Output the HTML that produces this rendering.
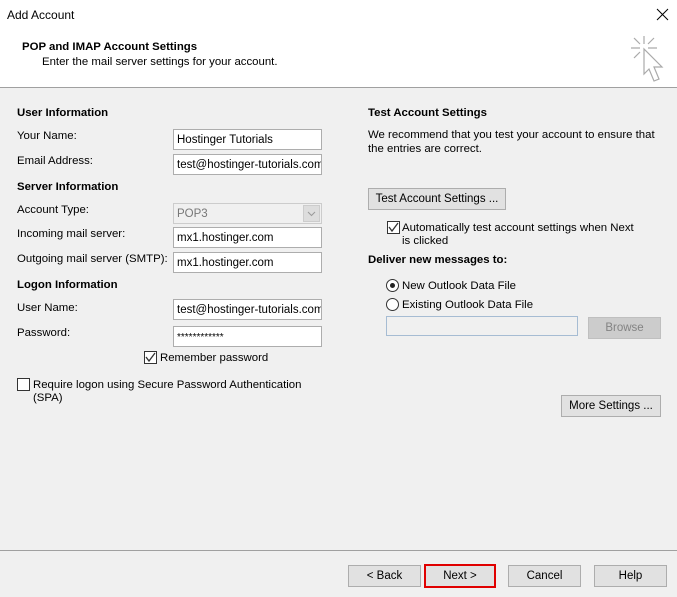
<!DOCTYPE html>
<html><head><style>
*{margin:0;padding:0;box-sizing:border-box}
body{width:677px;height:597px;background:#f0f0f0;font-family:"Liberation Sans",Arial,sans-serif;font-size:11.4px;color:#000;position:relative;overflow:hidden}
.a{position:absolute;white-space:nowrap;line-height:13px}
.b{font-weight:bold}
.in{position:absolute;background:#fff;border:1px solid #adadad;height:21px;padding:4px 0 0 3px;font-size:11.5px;overflow:hidden;white-space:nowrap;left:173px;width:149px}
.btn{position:absolute;background:#e1e1e1;border:1px solid #adadad;text-align:center;line-height:21px;font-size:11.5px}
.cb{position:absolute;width:13px;height:13px;border:1px solid #333;background:#fff}
.rd{position:absolute;width:13px;height:13px;border:1px solid #333;border-radius:50%;background:#fff}
</style></head><body>
<div style="position:absolute;left:0;top:0;width:677px;height:88px;background:#fff;border-bottom:1px solid #a0a0a0"></div>
<div class="a" style="left:7px;top:9px;font-size:12px">Add Account</div>
<svg style="position:absolute;left:656px;top:8px" width="13" height="13"><path d="M1 1L12 12M12 1L1 12" stroke="#000" stroke-width="1"/></svg>
<div class="a b" style="left:22px;top:41px">POP and IMAP Account Settings</div>
<div class="a" style="left:42px;top:56px">Enter the mail server settings for your account.</div>
<svg style="position:absolute;left:628px;top:34px" width="40" height="52"><g stroke="#aaa" stroke-width="1.2" fill="none"><path d="M16 2V10M3 14H12M6 4L12 10M26 4L20 10M20 14H29M6 24L12 18"/><path d="M16 15L16 40L21 35L26 47L31 45L26 33L34 33Z" fill="#fff"/></g></svg>

<div class="a b" style="left:17px;top:107px">User Information</div>
<div class="a" style="left:17px;top:130px">Your Name:</div>
<div class="a" style="left:17px;top:155px">Email Address:</div>
<div class="a b" style="left:17px;top:181px">Server Information</div>
<div class="a" style="left:17px;top:204px">Account Type:</div>
<div class="a" style="left:17px;top:228px">Incoming mail server:</div>
<div class="a" style="left:17px;top:253px">Outgoing mail server (SMTP):</div>
<div class="a b" style="left:17px;top:279px">Logon Information</div>
<div class="a" style="left:17px;top:302px">User Name:</div>
<div class="a" style="left:17px;top:327px">Password:</div>
<div class="in" style="top:129px">Hostinger Tutorials</div>
<div class="in" style="top:154px">test@hostinger-tutorials.com</div>
<div class="in" style="top:203px;background:#f0f0f0;border-color:#ccc;color:#777">POP3<div style="position:absolute;right:1px;top:1px;width:17px;height:17px;background:#ddd;border:1px solid #ccc"><svg width="15" height="15"><path d="M4 6L7.5 9.5L11 6" stroke="#999" fill="none"/></svg></div></div>
<div class="in" style="top:227px">mx1.hostinger.com</div>
<div class="in" style="top:252px">mx1.hostinger.com</div>
<div class="in" style="top:299px">test@hostinger-tutorials.com</div>
<div class="in" style="top:326px;font-size:10px;padding-top:5px">************</div>
<div class="cb" style="left:144px;top:351px"><svg width="11" height="11" style="position:absolute;left:0;top:0"><path d="M1 5L4 9L10 1" stroke="#333" fill="none" stroke-width="1.3"/></svg></div>
<div class="a" style="left:160px;top:352px">Remember password</div>
<div class="cb" style="left:17px;top:378px"></div>
<div class="a" style="left:33px;top:379px">Require logon using Secure Password Authentication</div>
<div class="a" style="left:33px;top:392px">(SPA)</div>

<div class="a b" style="left:368px;top:107px">Test Account Settings</div>
<div class="a" style="left:368px;top:129px">We recommend that you test your account to ensure that</div>
<div class="a" style="left:368px;top:143px">the entries are correct.</div>
<div class="btn" style="left:368px;top:188px;width:138px;height:22px">Test Account Settings ...</div>
<div class="cb" style="left:387px;top:221px"><svg width="11" height="11" style="position:absolute;left:0;top:0"><path d="M1 5L4 9L10 1" stroke="#333" fill="none" stroke-width="1.3"/></svg></div>
<div class="a" style="left:402px;top:222px">Automatically test account settings when Next</div>
<div class="a" style="left:402px;top:235px">is clicked</div>
<div class="a b" style="left:368px;top:254px">Deliver new messages to:</div>
<div class="rd" style="left:386px;top:279px"><div style="position:absolute;left:3px;top:3px;width:5px;height:5px;border-radius:50%;background:#222"></div></div>
<div class="a" style="left:402px;top:280px">New Outlook Data File</div>
<div class="rd" style="left:386px;top:298px"></div>
<div class="a" style="left:402px;top:299px">Existing Outlook Data File</div>
<div style="position:absolute;left:386px;top:316px;width:192px;height:20px;border:1px solid #a6bcd3;background:#f0f0f0"></div>
<div class="btn" style="left:588px;top:317px;width:73px;height:22px;background:#ccc;border-color:#bfbfbf;color:#838383">Browse</div>
<div class="btn" style="left:561px;top:395px;width:100px;height:22px">More Settings ...</div>

<div style="position:absolute;left:0;top:550px;width:677px;height:1px;background:#a0a0a0"></div>
<div class="btn" style="left:348px;top:565px;width:73px;height:22px">&lt; Back</div>
<div class="btn" style="left:424px;top:564px;width:72px;height:24px;border:2px solid #e00000;line-height:20px">Next &gt;</div>
<div class="btn" style="left:508px;top:565px;width:73px;height:22px">Cancel</div>
<div class="btn" style="left:594px;top:565px;width:73px;height:22px">Help</div>
</body></html>
